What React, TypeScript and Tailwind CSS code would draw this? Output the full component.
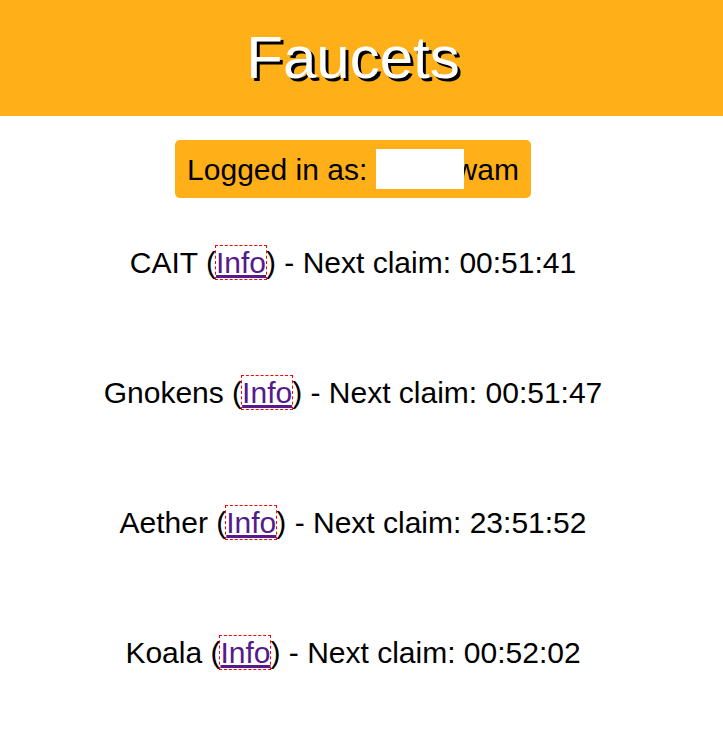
const faucets = [
    { name: "CAIT", next: "00:51:41" },
    { name: "Gnokens", next: "00:51:47" },
    { name: "Aether", next: "23:51:52" },
    { name: "Koala", next: "00:52:02" },
];

const FaucetRow = ({ name, next }: { name: string; next: string }) => (
    <div className="h-[130px] flex items-center justify-center">
        <p>
            {name} (
            <a
                href="#"
                className="text-[#551A8B] underline decoration-[3px] outline-1 outline-dashed outline-[color:#ff0000]"
            >
                Info
            </a>
            ) - Next claim: {next}
        </p>
    </div>
);

const App = () => {
    return (
        <div className="min-h-[735px] bg-white text-black text-[30px] font-['Liberation_Sans',Arial,sans-serif]">
            <header className="h-[116px] bg-[#FFB018] flex items-center justify-center pr-[17px]">
                <h1 className="text-[60px] text-white [text-shadow:3px_3px_0_#000]">
                    Faucets
                </h1>
            </header>

            <main className="pr-[17px] pt-6 flex flex-col items-center">
                <div className="h-[58px] px-3 flex items-center bg-[#FFB018] rounded-[5px]">
                    <span className="whitespace-pre">Logged in as: </span>
                    {/* redacted name */}
                    <span className="relative z-10 inline-block w-[88px] h-[40px] -mr-[8px] bg-white" />
                    <span>wam</span>
                </div>

                <div className="w-full -mt-px">
                    {faucets.map((f) => (
                        <FaucetRow key={f.name} name={f.name} next={f.next} />
                    ))}
                </div>
            </main>
        </div>
    );
};

export default App;
